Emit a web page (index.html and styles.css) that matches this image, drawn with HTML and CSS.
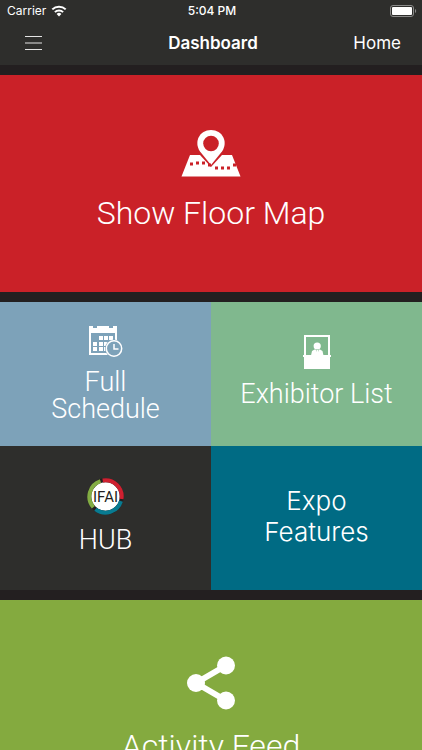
FILE: index.html
```html
<!DOCTYPE html>
<html lang="en">
<head>
  <meta charset="UTF-8" />
  <meta name="viewport" content="width=device-width, initial-scale=1.0">
  <title>Dashboard</title>
  <link rel="stylesheet" href="styles.css">
</head>
<body>

  <header class="header">
    <div class="status-bar">
      <div class="carrier">
        <span>Carrier</span>
        <svg width="16" height="12" viewBox="0 0 16 12" fill="none" stroke="#fff" stroke-width="2">
          <path d="M1.3 4.4a9.5 9.5 0 0 1 13.4 0M3.9 7.1a5.8 5.8 0 0 1 8.2 0" />
          <path d="M8 11.4L5.6 9a3.4 3.4 0 0 1 4.8 0z" fill="#fff" stroke="none" />
        </svg>
      </div>
      <span class="time">5:04 PM</span>
      <svg class="battery" width="27" height="12" viewBox="0 0 27 12">
        <rect x="0.5" y="0.5" width="23" height="11" rx="2.5" fill="none" stroke="#8b8b8a" />
        <rect x="2" y="2" width="20" height="8" rx="1" fill="#fff" />
        <path d="M25 4c1.6 .6 1.6 3.4 0 4z" fill="#8b8b8a" />
      </svg>
    </div>
    <nav class="nav-bar">
      <button class="menu-button" type="button" aria-label="Menu">
        <svg width="17" height="14" viewBox="0 0 17 14" stroke="#e4e4e4">
          <path d="M0 .5h17M0 7h17M0 13.5h17" />
        </svg>
      </button>
      <h1>Dashboard</h1>
      <a class="home-link" href="#home">Home</a>
    </nav>
  </header>

  <main class="dashboard">
    <a class="tile wide floor-map" href="#map">
      <svg width="60" height="48" viewBox="0 0 60 48">
        <path d="M9 26h42l8.5 21.5H.5z" fill="#fff" />
        <path d="M30 38L19 26h22z" fill="#ca2128" />
        <path d="M30 36L19 22.500C12.500 13 18.500 1 30 1s17.500 12 11 21.500z" fill="#fff" />
        <circle cx="30" cy="14.500" r="7.800" fill="#ca2128" />
        <path d="M9 33.500h3v3H9zm6-1h3v3h-3zm6 0h3v3h-3zm6 2h3v3h-3zm7 3h3v3h-3zm6 0h3v3h-3zm6 0h3v3h-3zm6-3h3v3h-3z" fill="#ca2128" />
      </svg>
      <span>Show Floor Map</span>
    </a>

    <div class="grid">
      <a class="tile schedule" href="#schedule">
        <svg width="34" height="32" viewBox="0 0 34 32">
          <path d="M0 1h4v2h4V1h12v2h4V1h4v29H0z" fill="#fff" />
          <path d="M2 8h24v20H2z" fill="#7da2b9" />
          <path d="M10 11h4v4h-4zm5 0h4v4h-4zm5 0h4v4h-4zM4 17h4v4H4zm6 0h4v4h-4zm5 0h4v4h-4zM4 22h4v4H4zm6 0h4v4h-4zm5 0h4v4h-4z" fill="#fff" />
          <circle cx="25" cy="23.5" r="9" fill="#7da2b9" />
          <circle cx="25" cy="23.5" r="7.700" fill="#7da2b9" stroke="#fff" stroke-width="1.5" />
          <path d="M25 19v5h4.500" fill="none" stroke="#fff" stroke-width="1.5" />
        </svg>
        <span>Full<br>Schedule</span>
      </a>

      <a class="tile exhibitors" href="#exhibitors">
        <svg width="28" height="34" viewBox="0 0 28 34" fill="#fff">
          <path d="M1 0h26v20h1v2h-1v12H1V22H0v-2h1zM3 2v18h22V2z" fill-rule="evenodd" />
          <path d="M8 20.500l1-4.500 2.500-1.500h1.300l1.200 6zm6.500 0l1.200-6h1.300l2.500 1.500 1 4.500zM13.500 15h1.500l.5 5.500h-2.500z" />
          <circle cx="14.200" cy="11" r="3.600" />
        </svg>
        <span>Exhibitor List</span>
      </a>

      <a class="tile hub" href="#hub">
        <svg width="37" height="37" viewBox="0 0 37 37">
          <circle cx="18.5" cy="18.5" r="15.5" fill="#fff" />
          <g fill="none" stroke-width="4">
            <circle cx="18.5" cy="18.5" r="16.2" stroke="#231f20" />
            <path d="M15.700 2.500A16.200 16.200 0 0 1 34.500 21" stroke="#cf2030" />
            <path d="M34 23.200A16.200 16.200 0 0 1 8.500 31.200" stroke="#087b91" />
            <path d="M6.400 29.200A16.200 16.200 0 0 1 13.500 3.100" stroke="#83ad43" />
          </g>
          <text class="logo-text" x="18.5" y="24" text-anchor="middle">IFAI</text>
        </svg>
        <span>HUB</span>
      </a>

      <a class="tile features" href="#features">
        <span>Expo<br>Features</span>
      </a>
    </div>

    <a class="tile wide activity" href="#activity">
      <svg width="48" height="54" viewBox="0 0 48 54" fill="#fff">
        <path d="M39 9.5L9 27l30 17.5" fill="none" stroke="#fff" stroke-width="6" />
        <circle cx="9" cy="27" r="9" />
        <circle cx="39" cy="9.5" r="9" />
        <circle cx="39" cy="44.5" r="9" />
      </svg>
      <span>Activity Feed</span>
    </a>
  </main>

</body>
</html>
```

FILE: styles.css
```css
* {
  box-sizing: border-box;
}

body {
  display: flex;
  flex-direction: column;
  height: 100vh;
  margin: 0;
  background-color: #231f20;
  color: #fff;
  font-family: Inter, "Liberation Sans", sans-serif;
}

.header {
  background-color: #2e2e2c;
}

.status-bar,
.nav-bar {
  display: grid;
  grid-template-columns: 1fr auto 1fr;
  align-items: center;
}

.status-bar {
  height: 21px;
  padding: 0 5px 0 7px;
  font-size: 12px;
}

.carrier {
  display: flex;
  align-items: center;
  gap: 5px;
}

.time {
  font-weight: 500;
}

.battery {
  justify-self: end;
}

.nav-bar {
  height: 44px;
  padding: 0 21px 0 25px;
}

.nav-bar h1 {
  margin: 0;
  font-size: 17px;
  font-weight: 600;
}

.menu-button {
  justify-self: start;
  display: flex;
  padding: 0;
  border: none;
  background: none;
  cursor: pointer;
}

.home-link {
  justify-self: end;
  color: #fff;
  font-size: 17px;
  text-decoration: none;
}

.dashboard {
  flex: 1;
  display: flex;
  flex-direction: column;
  gap: 10px;
  padding-top: 10px;
  overflow-y: auto;
  scrollbar-width: none;
}

.grid {
  flex-shrink: 0;
  display: grid;
  grid-template-columns: 1fr 1fr;
}

.tile {
  display: flex;
  flex-direction: column;
  align-items: center;
  justify-content: center;
  gap: 12px;
  min-height: 144px;
  padding-bottom: 5px;
  color: #fff;
  font-family: Roboto, sans-serif;
  font-size: 27px;
  font-weight: 300;
  line-height: 27px;
  text-align: center;
  text-decoration: none;
}

.wide {
  flex-shrink: 0;
  gap: 20px;
  min-height: 217px;
  padding-bottom: 0;
  font-size: 32px;
  line-height: 32px;
}

.floor-map {
  padding-bottom: 10px;
  background-color: #ca2128;
}

.schedule {
  padding-bottom: 0;
  background-color: #7da2b9;
}

.exhibitors {
  background-color: #80b88e;
}

.hub {
  background-color: #2e2e2c;
}

.features {
  background-color: #006b84;
  font-family: Inter, sans-serif;
  font-size: 26px;
  line-height: 31px;
}

.activity {
  background-color: #84aa3f;
}

.logo-text {
  fill: #231f20;
  font-family: Roboto, sans-serif;
  font-size: 15px;
  font-weight: 400;
}
```
